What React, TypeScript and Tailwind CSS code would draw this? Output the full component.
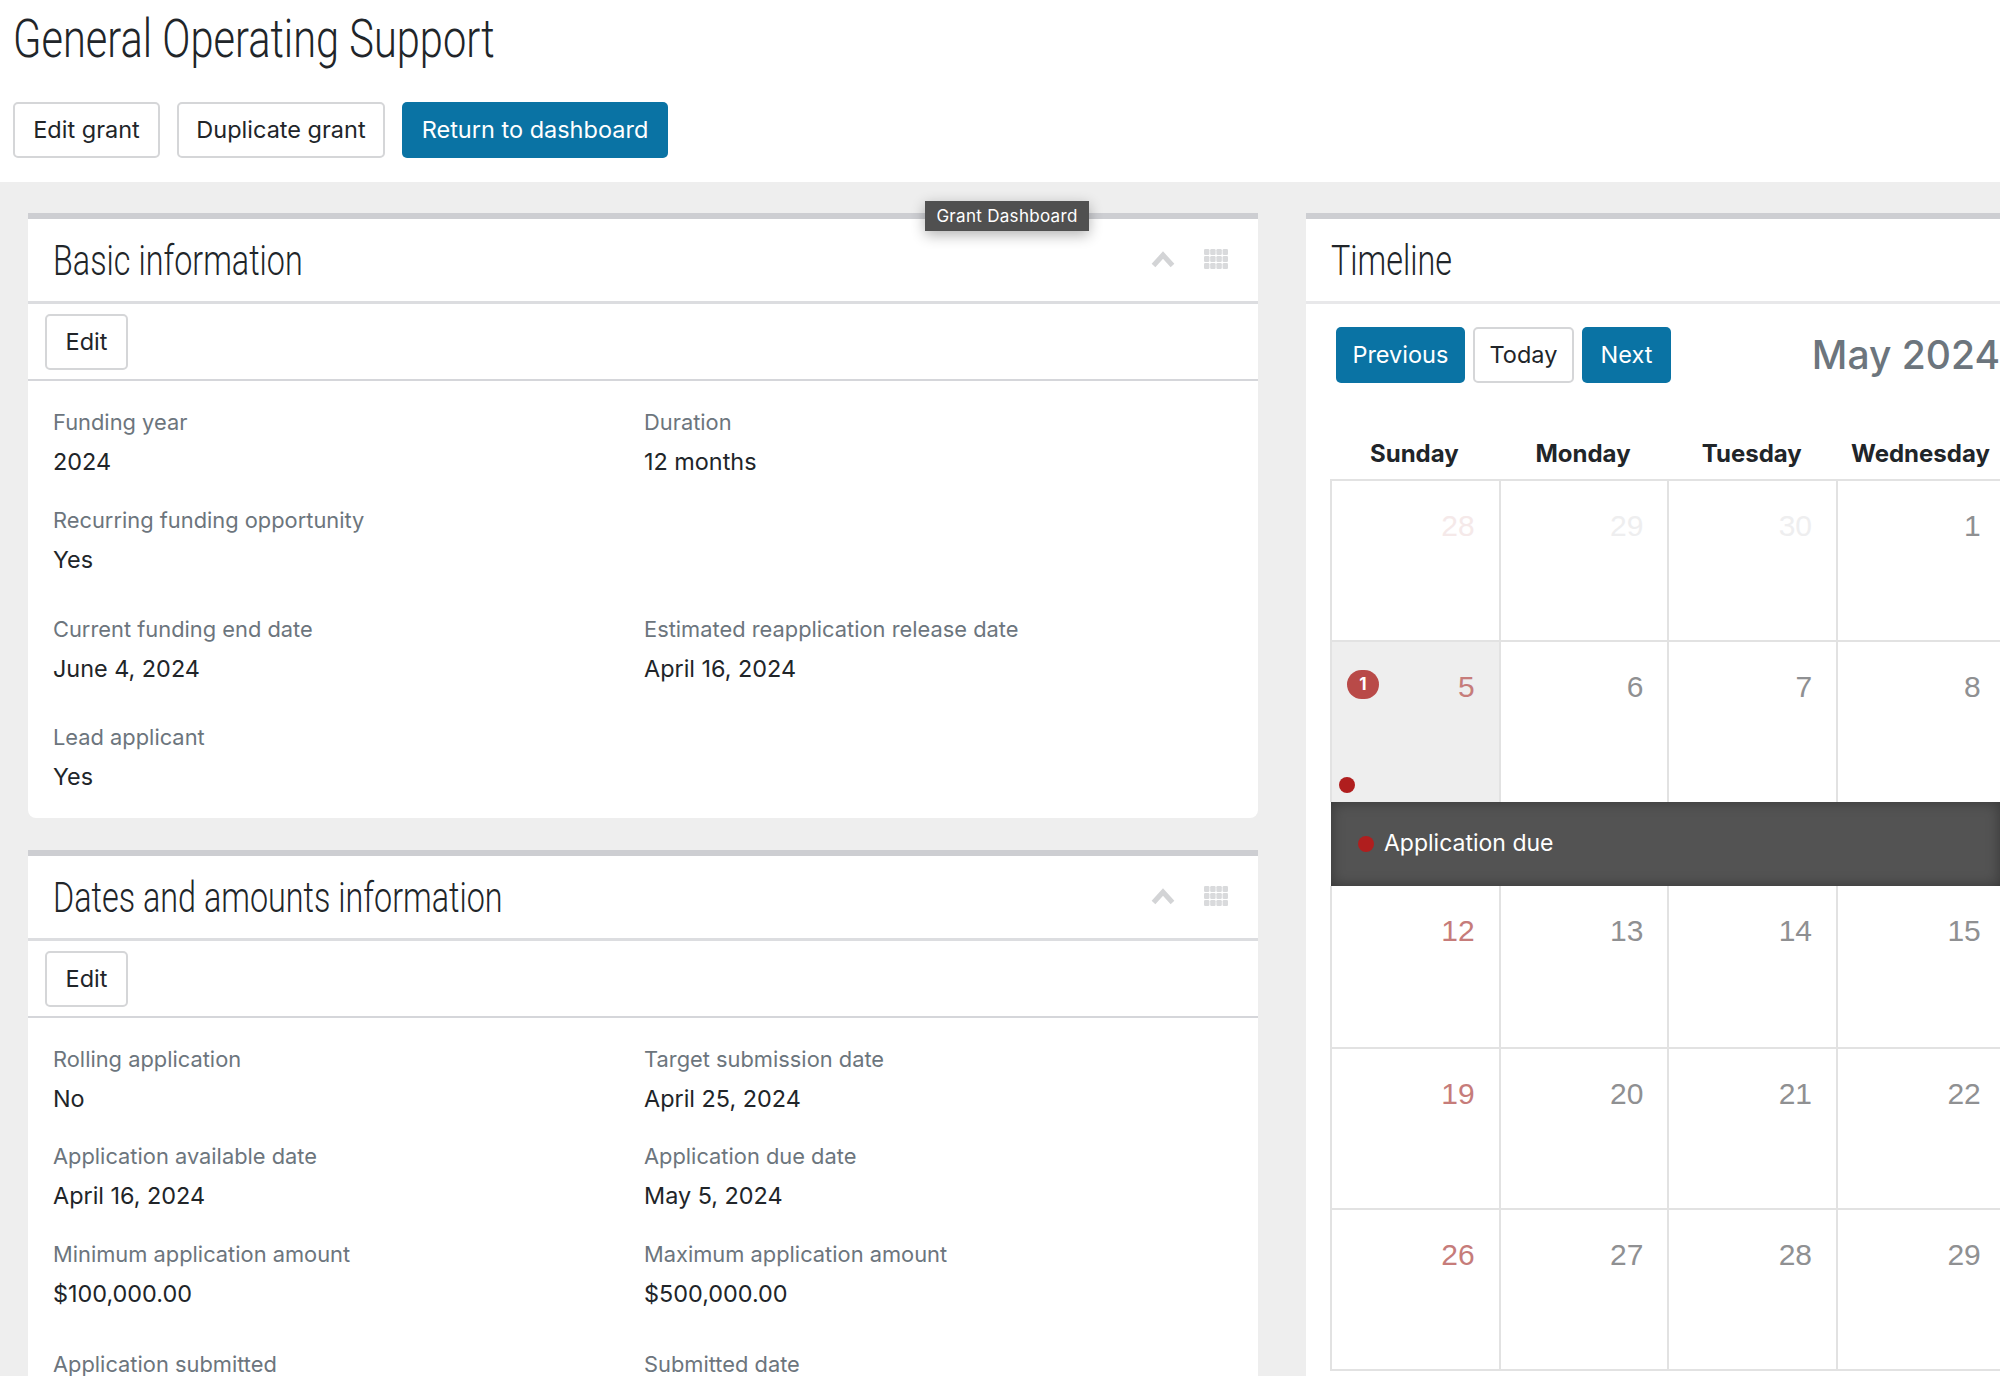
import React from "react";

const narrow = "font-['Roboto',sans-serif] font-light origin-left scale-x-[0.77]";

function Btn({ children, primary, className = "" }: { children: React.ReactNode; primary?: boolean; className?: string }) {
  return (
    <button
      className={
        "h-[56px] rounded-[5px] text-[23.5px] leading-none whitespace-nowrap " +
        (primary ? "bg-[#0a73a4] text-white" : "bg-white text-[#212529] border-2 border-[#d5d6d8]") +
        " " +
        className
      }
    >
      {children}
    </button>
  );
}

function Field({ label, value }: { label: string; value?: string }) {
  return (
    <div>
      <div className="text-[21.85px] leading-[36px] text-[#6c757d] whitespace-nowrap">{label}</div>
      {value ? <div className="text-[23.4px] leading-[44px] text-[#212529] whitespace-nowrap">{value}</div> : null}
    </div>
  );
}

function CardHead({ title }: { title: string }) {
  return (
    <div className="h-[85px] flex items-center justify-between pl-[25px] pr-[30px] border-b-[3px] border-[#dcdde0]">
      <h2 className={narrow + " text-[42px] text-[#212529] whitespace-nowrap"}>{title}</h2>
      <div className="flex items-center gap-[29px] -mt-[3px]">
        <svg width="24" height="18" viewBox="0 0 24 18" fill="none">
          <path d="M2.5 15.5 L12 5 L21.5 15.5" stroke="#d3d4d6" strokeWidth="5" />
        </svg>
        <svg width="24" height="20" viewBox="0 0 24 20" fill="#d9dadc">
          {[0, 1, 2].map((r) =>
            [0, 1, 2, 3].map((c) => <rect key={`${r}-${c}`} x={c * 6.2} y={r * 7} width="5.4" height="6" rx="1.2" />)
          )}
        </svg>
      </div>
    </div>
  );
}

function InfoCard({ title, rows, className = "" }: { title: string; rows: { mt: string; items: [string, string?][] }[]; className?: string }) {
  return (
    <section className={"bg-white border-t-[6px] border-[#cdced2] rounded-b-[8px] " + className}>
      <CardHead title={title} />
      <div className="h-[77px] pl-[17px] pt-[10px] border-b-2 border-[#d5d6da]">
        <Btn className="w-[83px]">Edit</Btn>
      </div>
      <div className="pl-[25px] pt-[23px] pb-[19px]">
        {rows.map((row, i) => (
          <div key={i} className={"grid grid-cols-[591px_1fr] " + row.mt}>
            {row.items.map(([l, v], j) => (
              <Field key={j} label={l} value={v} />
            ))}
          </div>
        ))}
      </div>
    </section>
  );
}

type Day = { n: number; tone: "sun" | "day" | "fadeSun" | "fade" };

function Cell({ d, hl }: { d: Day; hl?: boolean }) {
  const tone = {
    sun: "text-[#c67c7a]",
    day: "text-[#8f9092]",
    fadeSun: "text-[#f5e9e9]",
    fade: "text-[#eeeeef]",
  }[d.tone];
  return (
    <div className={"relative border-l-2 border-[#e2e2e2] pt-[27px] pr-[24px] text-right " + (hl ? "bg-[#eeeeee]" : "")}>
      <span className={"font-['Liberation_Sans',sans-serif] text-[30px] leading-[36px] " + tone}>{d.n}</span>
      {hl ? (
        <>
          <span className="absolute left-[15px] top-[28px] w-[32px] h-[29px] rounded-full bg-[#b94a48] text-white text-[17px] font-bold leading-[29px] text-center">1</span>
          <span className="absolute left-[7px] top-[135px] w-[16px] h-[16px] rounded-full bg-[#b01e1e]" />
        </>
      ) : null}
    </div>
  );
}

function Week({ days, hlFirst, noTop }: { days: Day[]; hlFirst?: boolean; noTop?: boolean }) {
  return (
    <div className={"grid grid-cols-[repeat(4,168.7px)] h-[161.25px] " + (noTop ? "" : "border-t-2 border-[#e2e2e2]")}>
      {days.map((d, i) => (
        <Cell key={i} d={d} hl={hlFirst && i === 0} />
      ))}
    </div>
  );
}

const mk = (start: number): Day[] =>
  Array.from({ length: 4 }, (_, i) => ({ n: start + i, tone: i === 0 ? "sun" : "day" }));

const row1: Day[] = [
  { n: 28, tone: "fadeSun" },
  { n: 29, tone: "fade" },
  { n: 30, tone: "fade" },
  { n: 1, tone: "day" },
];

export default function App() {
  return (
    <div className="relative w-[2000px] h-[1376px] overflow-hidden bg-[#eeeeee] font-['Inter',sans-serif]">
      <header className="h-[182px] bg-white pl-[13px] pt-[8px]">
        <h1 className={narrow + " text-[54px] leading-[62px] text-[#212529] whitespace-nowrap"}>General Operating Support</h1>
        <div className="flex gap-[17px] mt-[32px]">
          <Btn className="w-[147px]">Edit grant</Btn>
          <Btn className="w-[208px]">Duplicate grant</Btn>
          <Btn primary className="w-[266px]">Return to dashboard</Btn>
        </div>
      </header>

      <main className="flex gap-[48px] pl-[28px] pt-[31px]">
        <div className="w-[1230px] shrink-0">
          <InfoCard
            title="Basic information"
            rows={[
              { mt: "", items: [["Funding year", "2024"], ["Duration", "12 months"]] },
              { mt: "mt-[18px]", items: [["Recurring funding opportunity", "Yes"]] },
              { mt: "mt-[29px]", items: [["Current funding end date", "June 4, 2024"], ["Estimated reapplication release date", "April 16, 2024"]] },
              { mt: "mt-[28px]", items: [["Lead applicant", "Yes"]] },
            ]}
          />
          <InfoCard
            className="mt-[32px]"
            title="Dates and amounts information"
            rows={[
              { mt: "", items: [["Rolling application", "No"], ["Target submission date", "April 25, 2024"]] },
              { mt: "mt-[17px]", items: [["Application available date", "April 16, 2024"], ["Application due date", "May 5, 2024"]] },
              { mt: "mt-[18px]", items: [["Minimum application amount", "$100,000.00"], ["Maximum application amount", "$500,000.00"]] },
              { mt: "mt-[30px]", items: [["Application submitted"], ["Submitted date"]] },
            ]}
          />
        </div>

        <section className="flex-1 min-w-0 h-[1163px] bg-white border-t-[6px] border-[#cdced2] overflow-hidden">
          <div className="h-[85px] flex items-center pl-[25px] border-b-[3px] border-[#e8e8ea]">
            <h2 className={narrow + " text-[42px] text-[#212529]"}>Timeline</h2>
          </div>
          <div className="flex items-center gap-[8px] pl-[30px] pt-[23px]">
            <Btn primary className="w-[135px]">Previous</Btn>
            <Btn className="w-[106px]">Today</Btn>
            <Btn primary className="w-[93px]">Next</Btn>
            <h3 className="ml-[133px] text-[39px] leading-[56px] font-medium text-[#6c757d] whitespace-nowrap">May 2024</h3>
          </div>
          <div className="pl-[24px]">
            <div className="grid grid-cols-[repeat(4,168.7px)] pt-[51px] pb-[5px]">
              {["Sunday", "Monday", "Tuesday", "Wednesday"].map((d) => (
                <div key={d} className="text-center text-[24px] leading-[40px] font-bold text-[#212529]">{d}</div>
              ))}
            </div>
            <Week days={row1} />
            <Week days={mk(5)} hlFirst />
            <div className="h-[84px] bg-[#535353] shadow-[inset_0_0_14px_rgba(0,0,0,0.35)] flex items-center pl-[27px] gap-[10px] ml-[1px]">
              <span className="w-[16px] h-[16px] rounded-full bg-[#b01e1e]" />
              <span className="text-[23px] text-white">Application due</span>
            </div>
            <Week days={mk(12)} noTop />
            <Week days={mk(19)} />
            <Week days={mk(26)} />
            <div className="border-t-2 border-[#e2e2e2]" />
          </div>
        </section>
      </main>

      <div className="absolute left-[925px] top-[201px] w-[164px] h-[30px] bg-[#505050] text-white text-[17px] tracking-[0.3px] leading-[30px] text-center shadow-[0_4px_14px_rgba(0,0,0,0.3)]">
        Grant Dashboard
      </div>
    </div>
  );
}
